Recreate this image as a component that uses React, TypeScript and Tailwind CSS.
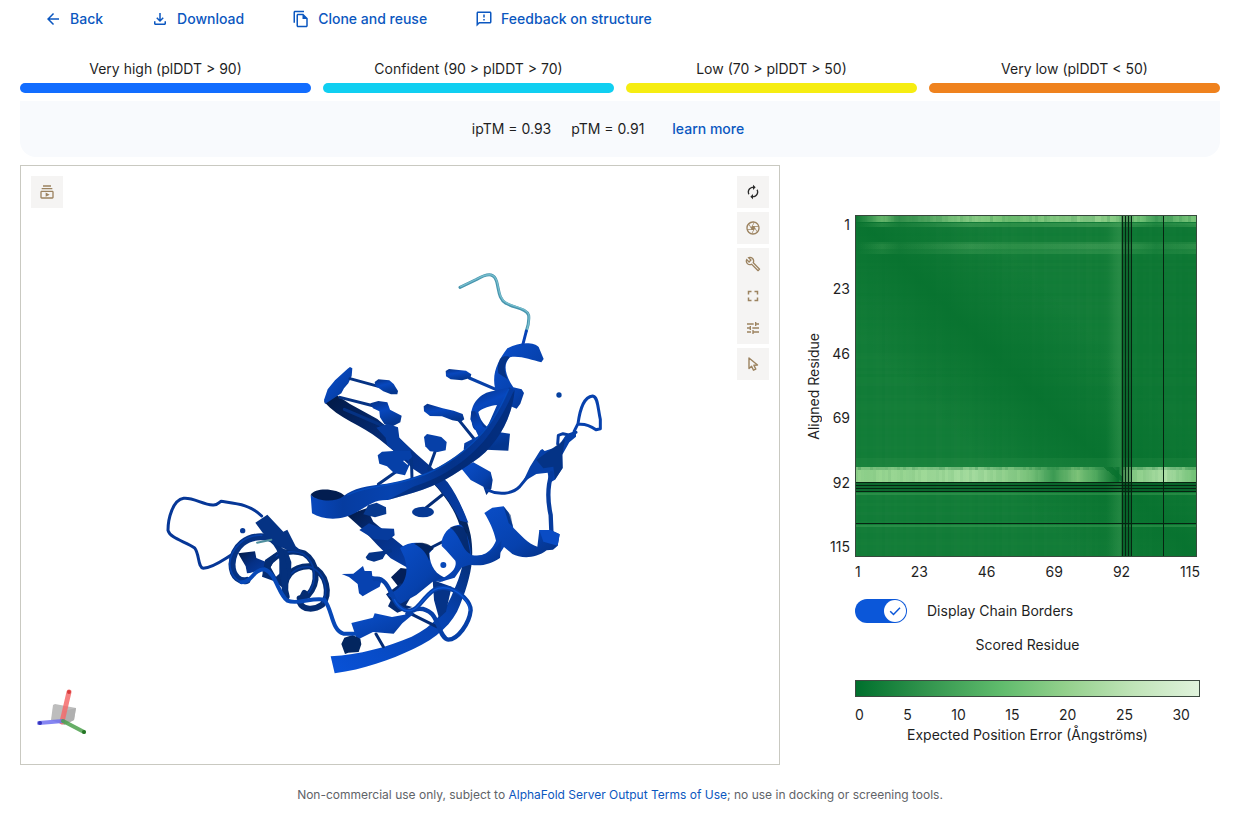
import { ReactNode, useState } from 'react';
import {
    MdArrowBack,
    MdAutorenew,
    MdFullscreen,
    MdOutlineBuild,
    MdOutlineCamera,
    MdOutlineFeedback,
    MdOutlineFileCopy,
    MdOutlineFileDownload,
    MdOutlineSubscriptions,
    MdTune,
} from 'react-icons/md';

const ACTIONS = [
    { label: 'Back', icon: MdArrowBack },
    { label: 'Download', icon: MdOutlineFileDownload },
    { label: 'Clone and reuse', icon: MdOutlineFileCopy },
    { label: 'Feedback on structure', icon: MdOutlineFeedback },
];

const CONFIDENCE = [
    { label: 'Very high (plDDT > 90)', color: 'bg-[#126dff]' },
    { label: 'Confident (90 > plDDT > 70)', color: 'bg-[#10cff1]' },
    { label: 'Low (70 > plDDT > 50)', color: 'bg-[#f6ed12]' },
    { label: 'Very low (plDDT < 50)', color: 'bg-[#ef821e]' },
];

const RESIDUES = [1, 23, 46, 69, 92, 115];
const ERRORS = [0, 5, 10, 15, 20, 25, 30];

export default function App() {
    const [borders, setBorders] = useState(true);

    return (
        <main className="bg-white pr-[21px] pl-5 font-['Inter',sans-serif] text-sm leading-5 text-[#1f1f1f]">
            <nav className="flex h-[38px] items-center">
                {ACTIONS.map(({ label, icon: Icon }) => (
                    <button key={label} className="flex items-center gap-2 px-6 font-medium text-[#0b57c0]">
                        <Icon className="size-[18px]" />
                        {label}
                    </button>
                ))}
            </nav>

            <ul className="mt-[21px] grid grid-cols-4 gap-3">
                {CONFIDENCE.map(item => (
                    <li key={item.label} className="text-center">
                        {item.label}
                        <div className={`mt-1 h-[10px] rounded-[5px] ${item.color}`} />
                    </li>
                ))}
            </ul>

            <section className="mt-2 flex h-14 items-center justify-center gap-5 rounded-b-2xl bg-[#f8fafd] pr-6">
                <span>ipTM = 0.93</span>
                <span>pTM = 0.91</span>
                <a href="#metrics" className="ml-2 font-medium text-[#0b57c0]">learn more</a>
            </section>

            <div className="mt-2 flex">
                <StructureViewer />
                <section className="w-[440px] shrink-0 pt-[50px]">
                    <div className="flex">
                        <div className="flex w-[75px] shrink-0 items-center justify-between pr-[5px] pl-6">
                            <span className="rotate-180 [writing-mode:vertical-rl]">Aligned Residue</span>
                            <div className="flex h-full flex-col justify-between text-right">
                                {RESIDUES.map(n => <span key={n}>{n}</span>)}
                            </div>
                        </div>
                        <ErrorPlot borders={borders} />
                    </div>

                    <div className="ml-[75px] w-[345px]">
                        <div className="mt-[5px] flex justify-between">
                            {RESIDUES.map(n => <span key={n}>{n}</span>)}
                        </div>
                        <label className="mt-[17px] flex h-6 items-center gap-5">
                            <span className="relative h-6 w-[52px]">
                                <input
                                    type="checkbox"
                                    checked={borders}
                                    onChange={e => setBorders(e.target.checked)}
                                    className="peer block h-6 w-[52px] appearance-none rounded-full bg-[#b8bcc4] checked:bg-[#0b57d9]"
                                />
                                <span className="pointer-events-none absolute top-px left-px flex size-[22px] items-center justify-center rounded-full bg-white text-[#0b57d9] peer-checked:left-[29px]">
                                    <svg viewBox="0 0 16 16" className="size-4" fill="none" stroke="currentColor" strokeWidth="1.5">
                                        <path d="M3.2 8.2 6.5 11.5 13 4.8" />
                                    </svg>
                                </span>
                            </span>
                            Display Chain Borders
                        </label>
                        <p className="mt-3 text-center">Scored Residue</p>
                        <div className="mt-[25px] h-[17px] border border-[#3c4a40] bg-[linear-gradient(to_right,#00702d,#31944d_20%,#5fbb6c_42%,#93d08c_61%,#c0e4b8_81%,#e0f3dc)]" />
                        <div className="mt-2 flex justify-between pr-[10px]">
                            {ERRORS.map(n => <span key={n}>{n}</span>)}
                        </div>
                        <p className="text-center">Expected Position Error (Ångströms)</p>
                    </div>
                </section>
            </div>

            <footer className="mt-5 text-center text-xs leading-5 text-[#5f6368]">
                Non-commercial use only, subject to{' '}
                <a href="#terms" className="text-[#0b57c0]">AlphaFold Server Output Terms of Use</a>
                ; no use in docking or screening tools.
            </footer>
        </main>
    );
}

function ToolButton({ label, children, dark }: { label: string, children: ReactNode, dark?: boolean }) {
    return (
        <button
            aria-label={label}
            className={`flex size-8 items-center justify-center bg-[#f5f4f3] ${dark ? 'text-[#2b2b2b]' : 'text-[#9c8360]'}`}
        >
            {children}
        </button>
    );
}

function StructureViewer() {
    return (
        <section className="relative min-w-0 flex-1 border border-[#c9c9c1]">
            <Protein />
            <div className="absolute top-[10px] left-[10px]">
                <ToolButton label="Animations"><MdOutlineSubscriptions className="size-4" /></ToolButton>
            </div>
            <div className="absolute top-[10px] right-[10px] flex flex-col gap-1">
                <ToolButton label="Reset camera" dark><MdAutorenew className="size-4" /></ToolButton>
                <ToolButton label="Screenshot"><MdOutlineCamera className="size-4" /></ToolButton>
                <div>
                    <ToolButton label="Controls"><MdOutlineBuild className="size-4" /></ToolButton>
                    <ToolButton label="Fullscreen"><MdFullscreen className="size-[18px]" /></ToolButton>
                    <ToolButton label="Settings"><MdTune className="size-4" /></ToolButton>
                </div>
                <ToolButton label="Selection mode">
                    <svg viewBox="0 0 16 16" className="size-4" fill="none" stroke="currentColor" strokeWidth="1.4" strokeLinejoin="round">
                        <path d="M4 2v10.5l2.6-2.3 1.9 4 2.3-1.1-1.9-3.9 3.6-.2z" />
                    </svg>
                </ToolButton>
            </div>
            <AxisGizmo />
        </section>
    );
}

function AxisGizmo() {
    return (
        <svg viewBox="0 0 60 56" className="absolute bottom-6 left-3 h-14 w-[60px]" fill="none" strokeLinecap="round">
            <path d="M20 21 22 20 43 24 41 36 31 41 18 36z" fill="#bdbdbd" />
            <path d="M31 27 43 24 41 36 31 41z" fill="#b0b0b0" />
            <path d="M29 38 36 8" stroke="#f46b6b" strokeWidth="5" opacity=".85" />
            <path d="M30 37 6 39" stroke="#7070f0" strokeWidth="4" opacity=".85" />
            <path d="M30 37 51 48" stroke="#4ca04c" strokeWidth="4" opacity=".85" />
            <circle cx="36" cy="8" r="2" fill="#d93c3c" />
            <circle cx="7" cy="39" r="2" fill="#3434bb" />
            <circle cx="51" cy="48" r="2" fill="#257525" />
        </svg>
    );
}

function Protein() {
    return (
        <svg viewBox="21 166 758 598" className="block w-full" fill="none" strokeLinecap="round" strokeLinejoin="round">
            <defs>
                <linearGradient id="band" x1="0" y1="0" x2="0.4" y2="1">
                    <stop offset="0" stopColor="#063184" />
                    <stop offset="0.45" stopColor="#0747be" />
                    <stop offset="1" stopColor="#04368f" />
                </linearGradient>
                <linearGradient id="lit" x1="0" y1="0" x2="1" y2="1">
                    <stop offset="0" stopColor="#0a4fcb" />
                    <stop offset="0.6" stopColor="#0641ad" />
                    <stop offset="1" stopColor="#042b75" />
                </linearGradient>
                <linearGradient id="dark" x1="0" y1="0" x2="1" y2="1">
                    <stop offset="0" stopColor="#021943" />
                    <stop offset="0.5" stopColor="#053085" />
                    <stop offset="1" stopColor="#063da5" />
                </linearGradient>
                <linearGradient id="backbone" x1="0" y1="1" x2="0.7" y2="0">
                    <stop offset="0" stopColor="#0852d8" />
                    <stop offset="0.6" stopColor="#0641ad" />
                    <stop offset="1" stopColor="#032358" />
                </linearGradient>
                <linearGradient id="front" gradientUnits="userSpaceOnUse" x1="30" y1="0" x2="640" y2="0">
                    <stop offset="0" stopColor="#0848bd" />
                    <stop offset="0.16" stopColor="#063ca0" />
                    <stop offset="0.4" stopColor="#0643b0" />
                    <stop offset="0.7" stopColor="#04338a" />
                    <stop offset="1" stopColor="#053ba0" />
                </linearGradient>
            </defs>

            {/* nucleic acid backbone, rear strand */}
            <g transform="translate(300 480) scale(.33333)">
                <path fill="url(#backbone)" d="M395 5 430-5C470 45 498 100 512 165C525 240 510 300 480 375C460 430 410 475 340 507C270 540 190 568 104 580L92 529C180 523 260 502 335 470C400 440 440 390 462 330C490 270 500 210 486 160C470 95 438 50 395 5Z" />
                <path stroke="#042c76" strokeWidth="9" d="M228 462 250 500M330 400 410 440M370 90 430 42M385 207 438 180" />
                <path fill="#053387" d="M398 300 455 320 438 395 417 415 402 360Z" />
                <path fill="url(#dark)" d="M140 105 200 85 220 125 280 175 330 215 325 265 272 235 232 195 190 150Z" />
                <path fill="#07398f" d="M204 76 230 68 258 82 259 102 225 112 190 103Z" />
                <path fill="#063b9d" d="M178 150 207 130 245 145 282 146 284 166 264 181 223 178Z" />
                <path fill="#053487" d="M197 232 207 218 248 213 273 206 276 216 256 223 248 237 222 245 202 239Z" />
                <ellipse cx="369" cy="96" rx="33" ry="16" fill="#063994" />
            </g>

            {/* upper strand with its bases */}
            <g transform="translate(300 350) scale(.33333)">
                <path fill="url(#dark)" d="M72 155 105 132 150 162 232 207 292 258 350 313 408 364 443 397C468 430 490 480 505 518L480 512C455 465 432 428 390 390L340 357 288 308 238 268C185 225 115 205 72 155Z" />
                <path fill="url(#lit)" d="M72 150 83 118 105 91 143 56 150 51 157 55 155 78 145 100 132 115 124 130 75 162Z" />
                <path stroke="#053283" strokeWidth="9" d="M150 86 235 109M120 142 222 168M133 178 250 228M287 366 235 403M334 320 336 386M407 300 386 358M475 208 525 270" />
                <path stroke="#0740a8" strokeWidth="9" d="M508 84 610 128" />
                <path fill="url(#band)" d="M224 96 235 88 268 91 281 102 294 123 292 133 273 133 250 124 226 107Z" />
                <path fill="url(#band)" d="M211 160 235 153 262 157 270 179 305 197 301 217 278 229 253 222 240 202 238 184 219 175Z" />
                <path fill="#063c9e" d="M229 233 262 221 294 232 298 263 333 299 329 322 295 315 262 286 257 263Z" />
                <path fill="#0640a8" fillRule="evenodd" d="M233 316 246 305 291 302 330 303 337 320 326 331 329 344 315 376 282 369 261 349 238 341ZM309 333 323 345 327 334 318 329Z" />
                <path fill="#0640a8" d="M372 261 381 252 407 257 424 261 440 276 437 301 413 306 390 304 376 289Z" />
                <path fill="url(#band)" d="M371 169 382 161 428 175 461 182 488 192 493 208 483 215 457 211 426 199 390 198 372 184Z" />
                <path fill="url(#band)" d="M437 63 447 57 498 62 514 73 511 84 486 91 452 88 438 79Z" />
            </g>

            {/* right-hand helix, sheet and loops */}
            <g transform="translate(430 260) scale(.33333)">
                <path fill="url(#lit)" d="M195 384C185 340 205 300 232 265C265 245 314 245 326 261L341 297 334 307C305 300 268 286 240 292C218 312 225 345 250 382L275 388 282 399 271 431 260 446 240 438 210 435Z" />
                <path fill="#021d50" opacity=".5" d="M210 296C222 285 236 289 240 292C218 312 222 336 233 358L205 340C202 322 204 309 210 296Z" />
                <path fill="url(#band)" fillRule="evenodd" d="M124 469C121 437 146 397 194 392L239 382 225 435 202 480 174 510H135C126 502 125 490 124 469ZM145 456C150 480 161 491 172 501L201 435C182 437 158 444 145 456Z" />
                <path stroke="#4795ae" strokeWidth="9" d="M90 82 140 58C182 34 194 45 200 65C207 91 206 118 228 130C253 145 289 144 296 166C298 185 294 199 289 213" />
                <path stroke="#76bdcd" strokeWidth="4" d="M92 80 140 57C182 34 194 45 201 65C208 91 207 116 229 128C254 143 290 142 297 166C299 185 295 197 291 209" />
                <path stroke="#0741b7" strokeWidth="9" d="M289 213 279 252" />
                <circle cx="387" cy="405" r="8" fill="#0641a0" />
                <path stroke="#0741ad" strokeWidth="9" d="M432 515 444 491C451 440 463 411 488 408C504 410 503 443 511 478L511 506 498 509C481 497 467 490 444 493" />
            </g>

            <g transform="translate(430 400) scale(.33333)">
                <path fill="url(#band)" d="M124 34 135 34 159 80 190 94 240 101 235 152 168 149 101 149 103 130 145 108 121 58Z" />
                <path fill="url(#lit)" d="M92 203 130 187 182 216 188 240 184 266 169 285 160 260 122 240Z" />
                <path stroke="#063ca2" strokeWidth="9" d="M172 270C205 286 246 283 269 260L300 222M383 132 385 106 399 101 416 105 438 97" />
                <path fill="#0640a8" d="M278 247 300 200 331 151 337 147 344 153 369 145 390 131 405 109 438 92 438 110 418 127 397 164 398 204 375 239 358 249 353 218 319 222Z" />
                <path fill="#042d78" opacity=".7" d="M319 180 405 118 397 164 398 204 375 239 370 200 340 205Z" />
                <path stroke="#063c9e" strokeWidth="13" d="M365 220C352 260 352 300 362 345L364 392" />
                <path fill="url(#lit)" d="M163 339 187 323 221 319 236 338 250 383C272 405 293 430 322 440L328 390 362 390 389 403 383 437 369 449 350 451C315 478 271 475 247 462L222 441C200 483 153 504 111 492L114 470C150 468 180 466 198 422 191 388 178 364 163 339Z" />
                <path fill="#022b70" opacity=".6" d="M221 320 242 345 249 381 236 369Z" />
                <path fill="#0a4cc4" d="M328 390 362 390 389 403 383 437 340 425Z" />
            </g>

            {/* central helix */}
            <g transform="translate(300 480) scale(.33333)">
                <path fill="#031f58" d="M273 292 302 264 342 269 348 312 303 330Z" />
                <path fill="#042a72" d="M258 343 302 310 345 330 318 376 337 381 292 398 264 379 272 362Z" />
                <path fill="url(#lit)" d="M300 204C329 183 369 183 401 205L388 220C390 260 409 287 442 295L429 304 398 305 349 345 302 371 262 345C316 323 329 282 313 232Z" />
                <path fill="#021b49" opacity=".8" d="M342 191C368 184 393 193 401 207L387 216 388 243C379 219 365 202 342 191Z" />
                <path fill="url(#lit)" d="M425 183C432 152 456 134 483 134C503 153 512 204 514 225 556 233 582 213 605 180L600 234C570 253 544 260 510 254L486 262 464 293 420 306 407 301C448 290 473 265 466 242L438 211 425 198Z" />
                <path fill="#031d4d" opacity=".65" d="M450 142C475 133 495 139 499 156L511 222C486 211 484 169 450 142Z" />
                <circle cx="430" cy="255" r="9" fill="#0849b9" />
                <path fill="#0742b0" d="M125 282 160 281 189 258 194 273 215 273 217 288 247 294 239 320 214 334 188 349 177 340 173 312 147 291Z" />
                <path fill="url(#lit)" d="M154 429 219 413 224 400 276 411 345 398 307 430 281 461 219 456 171 480Z" />
                <path fill="#03265f" d="M124 492 133 473 158 465 181 476 184 493 176 516 145 518 135 522Z" />
                <path stroke="#0640a8" strokeWidth="13" d="M224 297C255 290 268 328 283 359C297 386 328 410 358 374C392 334 407 315 449 326C481 336 512 365 512 391C508 432 472 479 445 479C421 476 419 429 396 402C373 382 347 382 322 402" />
                <path stroke="#0c55d2" strokeWidth="4" d="M283 359C297 386 328 410 358 374C392 334 407 315 449 326C481 336 508 365 509 391" />
            </g>

            {/* front ribbon */}
            <g transform="translate(300 350) scale(.33333)">
                <path fill="#021d50" d="M32 435C45 412 109 414 135 438L111 458 64 466Z" />
                <path fill="url(#front)" d="M32 435C55 455 105 458 130 439C160 414 200 407 260 401C360 382 442 353 535 260C580 212 610 160 627 112L644 120C638 197 595 287 518 337C463 373 418 407 340 428L264 450C207 448 189 486 135 501C99 511 61 505 36 490Z" />
                <path fill="#02225e" opacity=".45" d="M340 410C430 385 520 320 570 250C605 200 625 160 638 130L644 120C638 197 595 287 518 337C463 373 418 407 340 428L264 450Z" />
                <path stroke="#0755cd" strokeWidth="4" opacity=".6" d="M143 435C185 414 228 411 275 402C372 383 448 347 520 277C573 228 604 170 626 118" />
            </g>

            {/* small helix on the left */}
            <g transform="translate(150 480) scale(.33333)">
                <path stroke="#063797" strokeWidth="9" d="M335 108C300 73 260 71 213 64C205 68 202 77 188 75C158 73 129 52 101 55C68 60 54 116 54 151C61 176 106 184 134 204C149 223 143 262 160 265C190 263 218 240 247 223" />
                <circle cx="278" cy="152" r="8" fill="#063997" />
                <path fill="url(#dark)" d="M264 220 315 214 319 234 354 248 340 267 300 279 291 280 287 259Z" />
                <path stroke="#042c72" strokeWidth="18" d="M347 274C361 222 417 205 462 220C502 246 510 308 473 347L449 355M410 350C392 291 430 257 481 259C534 278 541 345 517 374C493 391 459 391 449 367L463 339" />
                <path stroke="#063b9c" strokeWidth="5" d="M357 246C382 215 430 208 460 222C496 246 504 300 476 338M422 282C440 264 460 258 481 261C528 278 536 335 518 368" />
                <path fill="#042c72" d="M345 240 385 212 362 262 378 290 410 262 423 283 400 325 371 303 336 290Z" />
                <path fill="#04307c" d="M388 200 411 211 424 246 423 290 397 320 388 280Z" />
                <path stroke="#04307c" strokeWidth="18" d="M352 173C396 184 407 252 404 341" />
                <path stroke="#053283" strokeWidth="21" d="M353 172C289 162 249 201 246 253C246 294 274 306 291 301" />
                <path stroke="#0741a9" strokeWidth="5" d="M335 166C285 163 242 205 239 250C240 283 258 303 280 307" />
                <path fill="#053384" d="M316 128 352 104 400 155 412 149 437 199 463 220 412 210 373 193 338 158Z" />
                <path stroke="#4f8f9d" strokeWidth="6" d="M321 188 364 179" />
                <path stroke="#0748b7" strokeWidth="12" d="M274 307C308 307 306 270 344 268C377 278 385 343 412 362C444 376 487 350 523 359C548 390 544 450 580 461L616 461" />
            </g>
        </svg>
    );
}

// repeatable pseudo random value between 0 and 1
const noise = (n: number) => {
    const v = Math.sin(n * 12.9898) * 43758.5453;
    return v - Math.floor(v);
};

const CELLS = Array.from({ length: 114 }, (_, i) => i);

function ErrorPlot({ borders }: { borders: boolean }) {
    return (
        <svg viewBox="0 0 342 342" className="block size-[342px] shrink-0" shapeRendering="crispEdges">
            <defs>
                <linearGradient id="top-band">
                    <stop offset="0" stopColor="#087330" />
                    <stop offset="0.08" stopColor="#6dbb70" />
                    <stop offset="0.13" stopColor="#348f4b" />
                    <stop offset="0.34" stopColor="#91d28a" />
                    <stop offset="0.45" stopColor="#71bf72" />
                    <stop offset="0.7" stopColor="#97d38f" />
                    <stop offset="0.83" stopColor="#79c77b" />
                    <stop offset="0.88" stopColor="#47a25c" />
                    <stop offset="1" stopColor="#83cc80" />
                </linearGradient>
                <linearGradient id="low-band">
                    <stop offset="0" stopColor="#95d48e" />
                    <stop offset="0.35" stopColor="#a7dda0" />
                    <stop offset="0.5" stopColor="#86ca83" />
                    <stop offset="0.58" stopColor="#3f9d55" />
                    <stop offset="0.65" stopColor="#80c47b" />
                    <stop offset="0.7" stopColor="#55ac62" />
                    <stop offset="0.77" stopColor="#07702d" />
                    <stop offset="0.79" stopColor="#82c980" />
                    <stop offset="0.91" stopColor="#b0e0a8" />
                    <stop offset="1" stopColor="#72c276" />
                </linearGradient>
                <linearGradient id="side-fade">
                    <stop offset="0" stopColor="#4ca65e" stopOpacity="0" />
                    <stop offset="1" stopColor="#4ca65e" stopOpacity=".4" />
                </linearGradient>
                <linearGradient id="diagonal" gradientUnits="userSpaceOnUse" x1="110" y1="230" x2="230" y2="110">
                    <stop offset="0" stopColor="#05702d" stopOpacity="0" />
                    <stop offset=".5" stopColor="#05702d" stopOpacity=".75" />
                    <stop offset="1" stopColor="#05702d" stopOpacity="0" />
                </linearGradient>
            </defs>
            <rect width="342" height="342" fill="#117b37" />
            {CELLS.map(i => (
                <g key={i} fill="#4aa55c">
                    <rect x={i * 3} width="3" height="342" opacity={noise(i + 3) * 0.05} />
                    <rect y={i * 3} width="342" height="3" opacity={noise(i + 200) * 0.06} />
                </g>
            ))}
            <rect width="342" height="342" fill="url(#diagonal)" />
            <rect x="277" y="10" width="65" height="242" fill="#05702d" opacity=".35" />
            <rect y="8" width="342" height="4" fill="url(#top-band)" opacity=".25" />
            <rect y="27" width="342" height="12" fill="url(#top-band)" opacity=".16" />
            <rect y="29" width="342" height="5" fill="url(#top-band)" opacity=".12" />
            <rect x="251" width="16" height="342" fill="url(#side-fade)" />
            <rect width="342" height="7" fill="url(#top-band)" />
            <rect y="243" width="342" height="9" fill="#4aa55c" opacity=".15" />
            <rect y="252" width="342" height="15" fill="url(#low-band)" />
            {CELLS.map(i => (
                <g key={i} fill="#1d8040">
                    <rect x={i * 3} width="3" height="7" opacity={noise(i + 17) * 0.25} />
                    <rect x={i * 3} y="252" width="3" height="3" opacity={0.2 + noise(i + 61) * 0.25} />
                    <rect x={i * 3} y="255" width="3" height="12" opacity={noise(i + 90) * 0.1} />
                </g>
            ))}
            <path d="M248 252h9l10 10v5z" fill="#07702d" opacity=".7" />
            <path d="M0 278.5h342M0 310.5h342" stroke="#4aa55c" strokeWidth="2" opacity=".4" />
            {borders && (
                <>
                    <rect x="266" width="11" height="342" fill="#003816" opacity=".3" />
                    <rect y="267" width="342" height="10" fill="#003816" opacity=".3" />
                    <path
                        d="M267.5 0v342M270.5 0v342M273.5 0v342M276.5 0v342M308.5 0v342M0 267.5h342M0 270.5h342M0 273.5h342M0 276.5h342M0 308.5h342"
                        stroke="#062411"
                    />
                </>
            )}
            <rect x=".5" y=".5" width="341" height="341" fill="none" stroke="#37493c" />
        </svg>
    );
}
